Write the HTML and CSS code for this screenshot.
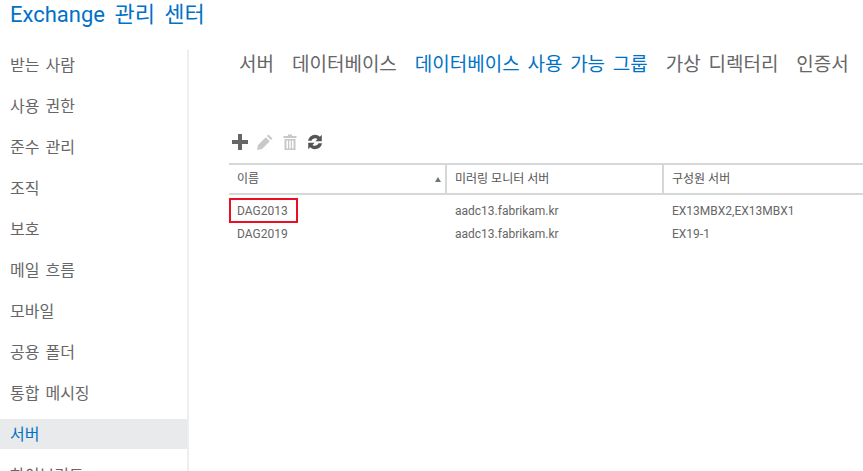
FILE: index.html
```html
<!DOCTYPE html>
<html lang="ko">
<head>
  <meta charset="UTF-8">
  <title>Exchange 관리 센터</title>
  <link rel="stylesheet" href="styles.css">
</head>
<body>
  <h1 class="app-title">Exchange 관리 센터</h1>
  <div class="layout">
    <ul class="side-nav">
      <li>받는 사람</li>
      <li>사용 권한</li>
      <li>준수 관리</li>
      <li>조직</li>
      <li>보호</li>
      <li>메일 흐름</li>
      <li>모바일</li>
      <li>공용 폴더</li>
      <li>통합 메시징</li>
      <li class="active">서버</li>
      <li>하이브리드</li>
    </ul>
    <div class="main">
      <div class="tabs">
        <span>서버</span>
        <span>데이터베이스</span>
        <span class="active">데이터베이스 사용 가능 그룹</span>
        <span>가상 디렉터리</span>
        <span>인증서</span>
      </div>
      <div class="toolbar">
        <svg class="icon" viewBox="0 0 16 16"><path d="M6 0h4v6h6v4h-6v6H6v-6H0V6h6z" fill="#666"/></svg>
        <svg class="icon" viewBox="0 0 16 16"><path d="M11.5 0.5l4 4-1.6 1.6-4-4zM8.800 3.200l4 4L5 15l-5 1 1-5z" fill="#c8c8c8"/></svg>
        <svg class="icon" viewBox="0 0 16 16"><path d="M1.500 2h4.500V0.500h4V2h4.500v2H1.500zM2.500 5h11v11h-11zM4.500 6.500v8h1.500v-8zM7.300 6.500v8h1.500v-8zM10 6.500v8h1.500v-8z" fill="#c8c8c8" fill-rule="evenodd"/></svg>
        <svg class="icon" viewBox="0 0 16 16"><path d="M8 0.800a7.200 7.200 0 0 1 4.900 1.900L14.800 0.800v6.400H8.400l2.100-2.100A3.800 3.800 0 0 0 4.500 6.800H1A7.200 7.200 0 0 1 8 0.800zM1.200 8.800h6.400l-2.100 2.100A3.800 3.800 0 0 0 11.500 9.200H15A7.200 7.200 0 0 1 3.100 13.300L1.200 15.200z" fill="#555"/></svg>
      </div>
      <div class="grid-wrap">
        <div class="grid-row grid-head">
          <div class="cell name-head"><span>이름</span><i class="sort-up"></i></div>
          <div class="cell">미러링 모니터 서버</div>
          <div class="cell">구성원 서버</div>
        </div>
        <div class="grid-row first">
          <div class="cell"><span class="mark">DAG2013</span></div>
          <div class="cell">aadc13.fabrikam.kr</div>
          <div class="cell">EX13MBX2,EX13MBX1</div>
        </div>
        <div class="grid-row">
          <div class="cell">DAG2019</div>
          <div class="cell">aadc13.fabrikam.kr</div>
          <div class="cell">EX19-1</div>
        </div>
      </div>
    </div>
  </div>
</body>
</html>
```

FILE: styles.css
```css
html, body { height: 100%; }
body { margin: 0; background: #fff; overflow: hidden; font-family: Roboto, "Noto Sans CJK KR", sans-serif; color: #666; }
.app-title { margin: 0; padding: 0 0 0 10px; height: 50px; font-size: 22px; line-height: 30px; font-weight: 400; color: #0072c6; word-spacing: 4px; }
.layout { display: flex; height: 421px; }
.side-nav { list-style: none; margin: 0; padding: 0; width: 187px; border-right: 2px solid #eee; flex-shrink: 0; }
.side-nav li { height: 41px; padding-left: 10px; font-size: 16px; line-height: 32px; word-spacing: 2px; color: #666; }
.side-nav li.active { height: 30px; margin-bottom: 11px; background: #e9eaec; color: #0072c6; }
.main { flex: 1; min-width: 0; padding-left: 40px; }
.tabs { display: flex; gap: 18px; margin-left: 10px; white-space: nowrap; font-size: 19px; line-height: 30px; word-spacing: 3px; height: 71px; }
.tabs .active { color: #0072c6; }
.toolbar { display: flex; align-items: center; gap: 9px; height: 42px; margin-left: 3px; }
.icon { width: 16px; height: 16px; }
.grid-row { display: grid; grid-template-columns: 218px 217px 1fr; font-size: 12px; line-height: 22px; }
.grid-row .cell { padding-left: 8px; white-space: nowrap; }
.grid-head { height: 28px; line-height: 28px; border-top: 2px solid #d5d8d8; border-bottom: 2px solid #d5d8d8; color: #555; }
.grid-head .cell { border-right: 2px solid #d5d8d8; }
.grid-head .cell:last-child { border-right: 0; }
.name-head { display: flex; align-items: center; justify-content: space-between; padding-right: 4px; }
.sort-up { width: 0; height: 0; border-left: 3.500px solid transparent; border-right: 3.500px solid transparent; border-bottom: 5px solid #6b7b6b; }
.first { margin-top: 5px; height: 23px; }
.mark { display: inline-block; position: relative; }
.mark::after { content: ""; position: absolute; left: -8px; top: -2px; width: 65px; height: 21px; border: 2px solid #e81123; }
```
